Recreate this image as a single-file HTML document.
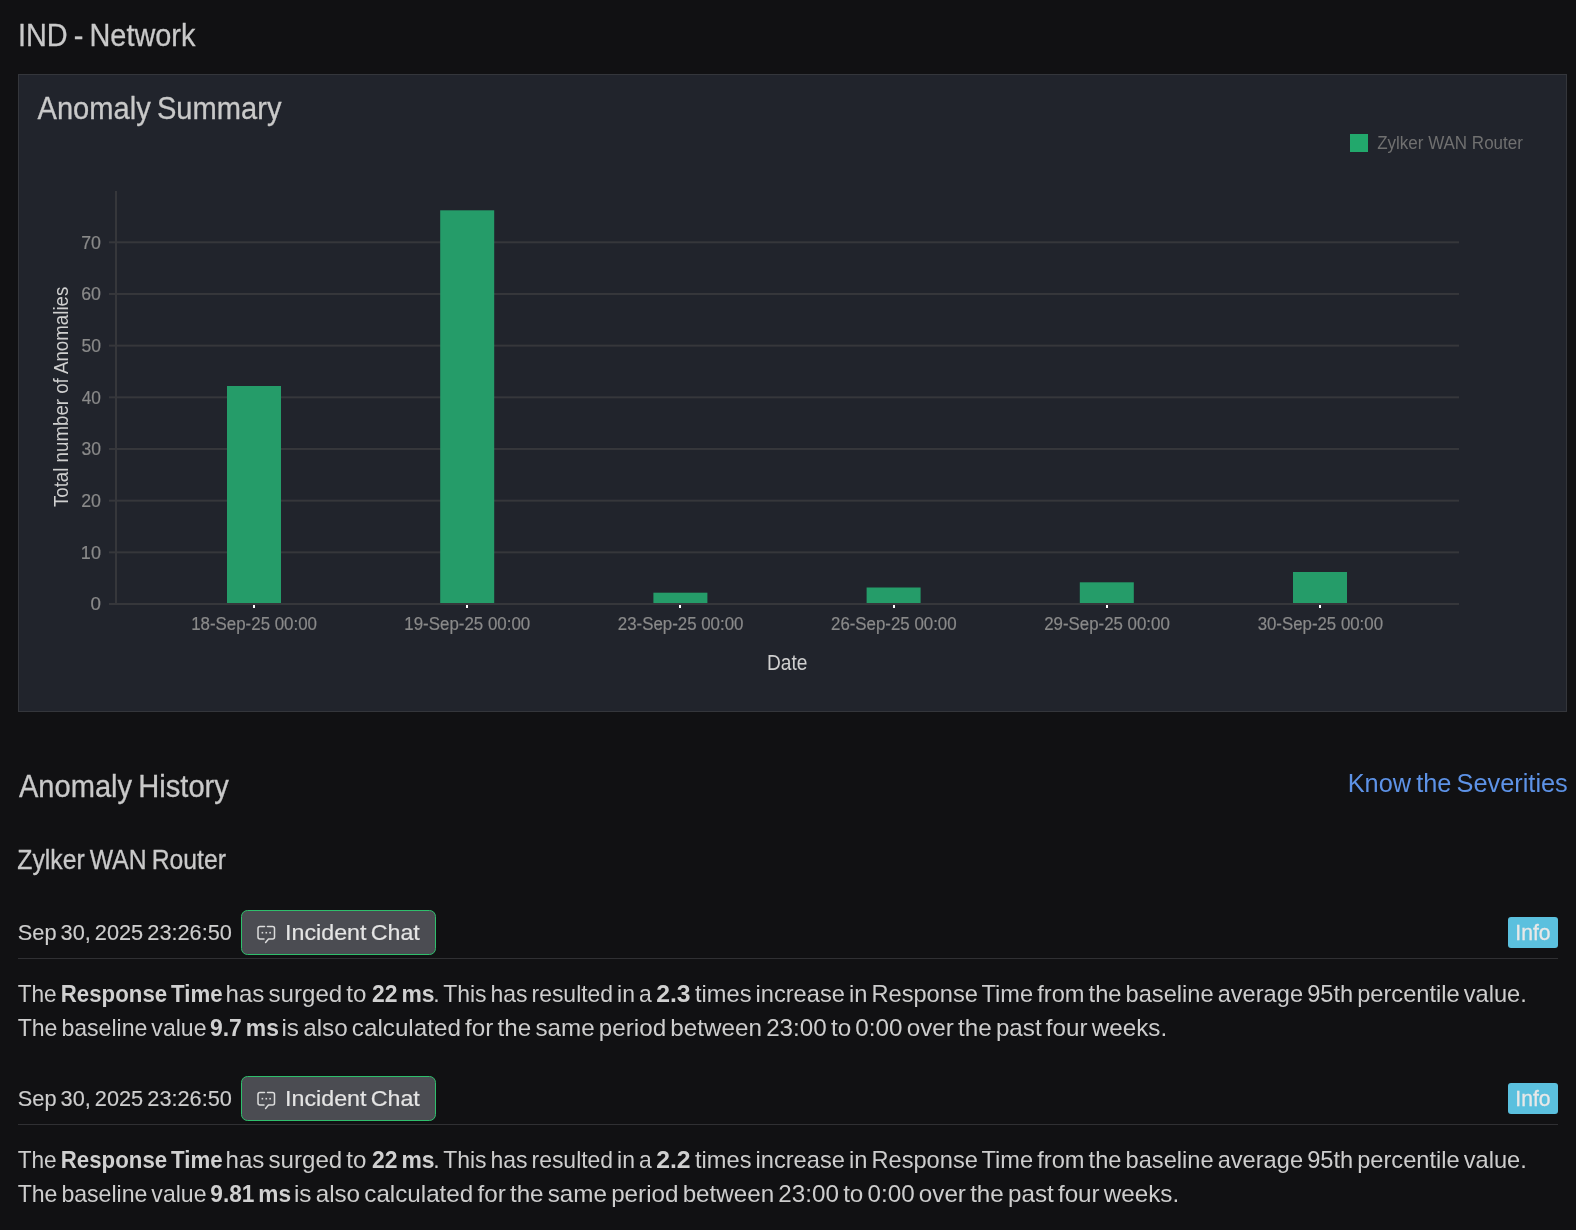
<!DOCTYPE html>
<html><head><meta charset="utf-8"><title>IND - Network</title>
<style>
html,body{margin:0;padding:0;background:#111113;}
body{width:1576px;height:1230px;overflow:hidden;font-family:"Liberation Sans",sans-serif;}
svg{display:block;will-change:transform;}
text{font-family:"Liberation Sans",sans-serif;}
</style></head>
<body>
<svg width="1576" height="1230" viewBox="0 0 1576 1230">
<rect x="18.5" y="74.5" width="1548" height="637" fill="#21242c" stroke="#34363b" stroke-width="1"/>
<rect x="109" y="603.00" width="1350" height="2" fill="#36373b"/>
<rect x="109" y="551.33" width="1350" height="2" fill="#36373b"/>
<rect x="109" y="499.66" width="1350" height="2" fill="#36373b"/>
<rect x="109" y="447.99" width="1350" height="2" fill="#36373b"/>
<rect x="109" y="396.32" width="1350" height="2" fill="#36373b"/>
<rect x="109" y="344.65" width="1350" height="2" fill="#36373b"/>
<rect x="109" y="292.98" width="1350" height="2" fill="#36373b"/>
<rect x="109" y="241.31" width="1350" height="2" fill="#36373b"/>
<rect x="115" y="191" width="2" height="413" fill="#36373b"/>
<rect x="227.0" y="386.0" width="54" height="217.0" fill="#259c69"/>
<rect x="253" y="605" width="2" height="3" fill="#ffffff"/>
<rect x="440.2" y="210.3" width="54" height="392.7" fill="#259c69"/>
<rect x="466" y="605" width="2" height="3" fill="#ffffff"/>
<rect x="653.4" y="592.7" width="54" height="10.3" fill="#259c69"/>
<rect x="679" y="605" width="2" height="3" fill="#ffffff"/>
<rect x="866.6" y="587.5" width="54" height="15.5" fill="#259c69"/>
<rect x="893" y="605" width="2" height="3" fill="#ffffff"/>
<rect x="1079.8" y="582.3" width="54" height="20.7" fill="#259c69"/>
<rect x="1106" y="605" width="2" height="3" fill="#ffffff"/>
<rect x="1293.0" y="572.0" width="54" height="31.0" fill="#259c69"/>
<rect x="1319" y="605" width="2" height="3" fill="#ffffff"/>
<rect x="1350" y="134" width="18" height="18" fill="#22a86c"/>
<rect x="241.5" y="910.5" width="194" height="44" rx="6" fill="#4b4c52" stroke="#2fbf6c" stroke-width="1"/>
<g transform="translate(0,0)" fill="none" stroke="#dcdcdc" stroke-width="1.5" stroke-linecap="round" stroke-linejoin="round">
<path d="M264.5 926.5 H260 a2 2 0 0 0 -2 2 V937 a2 2 0 0 0 2 2 H264"/>
<path d="M267.5 926.5 H272.5 a2 2 0 0 1 2 2 V937 a2 2 0 0 1 -2 2 H268.5 L265.6 942.5"/>
</g>
<g fill="#dcdcdc"><rect x="261.6" y="931.9" width="1.6" height="1.6"/><rect x="265.5" y="931.9" width="1.6" height="1.6"/><rect x="269.3" y="931.9" width="1.6" height="1.6"/></g>
<rect x="1508" y="917" width="50" height="31" rx="3" fill="#5bc0de"/>
<rect x="18" y="958" width="1540" height="1" fill="#303033"/>
<rect x="241.5" y="1076.5" width="194" height="44" rx="6" fill="#4b4c52" stroke="#2fbf6c" stroke-width="1"/>
<g transform="translate(0,166)" fill="none" stroke="#dcdcdc" stroke-width="1.5" stroke-linecap="round" stroke-linejoin="round">
<path d="M264.5 926.5 H260 a2 2 0 0 0 -2 2 V937 a2 2 0 0 0 2 2 H264"/>
<path d="M267.5 926.5 H272.5 a2 2 0 0 1 2 2 V937 a2 2 0 0 1 -2 2 H268.5 L265.6 942.5"/>
</g>
<g fill="#dcdcdc"><rect x="261.6" y="1097.9" width="1.6" height="1.6"/><rect x="265.5" y="1097.9" width="1.6" height="1.6"/><rect x="269.3" y="1097.9" width="1.6" height="1.6"/></g>
<rect x="1508" y="1083" width="50" height="31" rx="3" fill="#5bc0de"/>
<rect x="18" y="1124" width="1540" height="1" fill="#303033"/>
<text x="17.88" y="46.2" textLength="177.52" lengthAdjust="spacingAndGlyphs" font-size="31" fill="#c9c9c9" word-spacing="-2" stroke="#c9c9c9" stroke-width="0.3">IND - Network</text>
<text x="37.54" y="119" textLength="243.92" lengthAdjust="spacingAndGlyphs" font-size="31" fill="#c9c9c9" word-spacing="-2" stroke="#c9c9c9" stroke-width="0.3">Anomaly Summary</text>
<text x="1377.17" y="149" textLength="145.71" lengthAdjust="spacingAndGlyphs" font-size="18" fill="#707070">Zylker WAN Router</text>
<text x="90.52" y="610.3" textLength="10.45" lengthAdjust="spacingAndGlyphs" font-size="18" fill="#8a8a8a" stroke="#8a8a8a" stroke-width="0.2">0</text>
<text x="80.87" y="558.63" textLength="20.08" lengthAdjust="spacingAndGlyphs" font-size="18" fill="#8a8a8a" stroke="#8a8a8a" stroke-width="0.2">10</text>
<text x="81.17" y="506.96" textLength="19.78" lengthAdjust="spacingAndGlyphs" font-size="18" fill="#8a8a8a" stroke="#8a8a8a" stroke-width="0.2">20</text>
<text x="81.45" y="455.29" textLength="19.49" lengthAdjust="spacingAndGlyphs" font-size="18" fill="#8a8a8a" stroke="#8a8a8a" stroke-width="0.2">30</text>
<text x="81.73" y="403.62" textLength="19.21" lengthAdjust="spacingAndGlyphs" font-size="18" fill="#8a8a8a" stroke="#8a8a8a" stroke-width="0.2">40</text>
<text x="81.45" y="351.95000000000005" textLength="19.49" lengthAdjust="spacingAndGlyphs" font-size="18" fill="#8a8a8a" stroke="#8a8a8a" stroke-width="0.2">50</text>
<text x="81.17" y="300.28000000000003" textLength="19.78" lengthAdjust="spacingAndGlyphs" font-size="18" fill="#8a8a8a" stroke="#8a8a8a" stroke-width="0.2">60</text>
<text x="81.17" y="248.61" textLength="19.78" lengthAdjust="spacingAndGlyphs" font-size="18" fill="#8a8a8a" stroke="#8a8a8a" stroke-width="0.2">70</text>
<text x="191.14" y="630" textLength="125.89" lengthAdjust="spacingAndGlyphs" font-size="18" fill="#8a8a8a" stroke="#8a8a8a" stroke-width="0.2">18-Sep-25 00:00</text>
<text x="404.34" y="630" textLength="125.89" lengthAdjust="spacingAndGlyphs" font-size="18" fill="#8a8a8a" stroke="#8a8a8a" stroke-width="0.2">19-Sep-25 00:00</text>
<text x="617.80" y="630" textLength="125.62" lengthAdjust="spacingAndGlyphs" font-size="18" fill="#8a8a8a" stroke="#8a8a8a" stroke-width="0.2">23-Sep-25 00:00</text>
<text x="831.00" y="630" textLength="125.62" lengthAdjust="spacingAndGlyphs" font-size="18" fill="#8a8a8a" stroke="#8a8a8a" stroke-width="0.2">26-Sep-25 00:00</text>
<text x="1044.20" y="630" textLength="125.62" lengthAdjust="spacingAndGlyphs" font-size="18" fill="#8a8a8a" stroke="#8a8a8a" stroke-width="0.2">29-Sep-25 00:00</text>
<text x="1257.67" y="630" textLength="125.36" lengthAdjust="spacingAndGlyphs" font-size="18" fill="#8a8a8a" stroke="#8a8a8a" stroke-width="0.2">30-Sep-25 00:00</text>
<text x="766.90" y="670.1" textLength="40.47" lengthAdjust="spacingAndGlyphs" font-size="21.5" fill="#cfcfcf">Date</text>
<text transform="rotate(-90)" x="-507.09" y="68" textLength="220.37" lengthAdjust="spacingAndGlyphs" font-size="20.5" fill="#cfcfcf">Total number of Anomalies</text>
<text x="18.94" y="796.8" textLength="209.91" lengthAdjust="spacingAndGlyphs" font-size="30.5" fill="#c9c9c9" word-spacing="-2" stroke="#c9c9c9" stroke-width="0.3">Anomaly History</text>
<text x="1347.72" y="792" textLength="220.07" lengthAdjust="spacingAndGlyphs" font-size="26" fill="#5d92e6" word-spacing="-2">Know the Severities</text>
<text x="17.36" y="869.2" textLength="208.62" lengthAdjust="spacingAndGlyphs" font-size="27" fill="#c9c9c9" word-spacing="-2" stroke="#c9c9c9" stroke-width="0.3">Zylker WAN Router</text>
<text x="17.79" y="940" textLength="214.17" lengthAdjust="spacingAndGlyphs" font-size="22" fill="#cdcdcd" word-spacing="-2" stroke="#cdcdcd" stroke-width="0.15">Sep 30, 2025 23:26:50</text>
<text x="285.09" y="940" textLength="134.72" lengthAdjust="spacingAndGlyphs" font-size="22" fill="#e4e4e4" word-spacing="-2" stroke="#e4e4e4" stroke-width="0.2">Incident Chat</text>
<text x="1515.30" y="940" textLength="35.21" lengthAdjust="spacingAndGlyphs" font-size="21.5" fill="#e8e8e8" stroke="#e8e8e8" stroke-width="0.3">Info</text>
<text x="17.65" y="1001.9" textLength="39.07" lengthAdjust="spacingAndGlyphs" font-size="24" fill="#cdcdcd">The</text>
<text x="60.81" y="1001.9" textLength="161.74" lengthAdjust="spacingAndGlyphs" font-size="24" fill="#d0d0d0" font-weight="bold" word-spacing="-2.5">Response Time</text>
<text x="225.49" y="1001.9" textLength="140.98" lengthAdjust="spacingAndGlyphs" font-size="24" fill="#cdcdcd" word-spacing="-2.5">has surged to</text>
<text x="371.98" y="1001.9" textLength="62.54" lengthAdjust="spacingAndGlyphs" font-size="24" fill="#d0d0d0" font-weight="bold" word-spacing="-2.5">22 ms</text>
<text x="433.21" y="1001.9" textLength="218.54" lengthAdjust="spacingAndGlyphs" font-size="24" fill="#cdcdcd" word-spacing="-2.5">. This has resulted in a</text>
<text x="656.23" y="1001.9" textLength="34.39" lengthAdjust="spacingAndGlyphs" font-size="24" fill="#d0d0d0" font-weight="bold">2.3</text>
<text x="695.00" y="1001.9" textLength="831.83" lengthAdjust="spacingAndGlyphs" font-size="24" fill="#cdcdcd" word-spacing="-2.5">times increase in Response Time from the baseline average 95th percentile value.</text>
<text x="17.64" y="1036.2" textLength="188.90" lengthAdjust="spacingAndGlyphs" font-size="24" fill="#cdcdcd" word-spacing="-2.5">The baseline value</text>
<text x="209.98" y="1036.2" textLength="68.94" lengthAdjust="spacingAndGlyphs" font-size="24" fill="#d0d0d0" font-weight="bold" word-spacing="-2.5">9.7 ms</text>
<text x="281.49" y="1036.2" textLength="885.70" lengthAdjust="spacingAndGlyphs" font-size="24" fill="#cdcdcd" word-spacing="-2.5">is also calculated for the same period between 23:00 to 0:00 over the past four weeks.</text>
<text x="17.79" y="1106" textLength="214.17" lengthAdjust="spacingAndGlyphs" font-size="22" fill="#cdcdcd" word-spacing="-2" stroke="#cdcdcd" stroke-width="0.15">Sep 30, 2025 23:26:50</text>
<text x="285.09" y="1106" textLength="134.72" lengthAdjust="spacingAndGlyphs" font-size="22" fill="#e4e4e4" word-spacing="-2" stroke="#e4e4e4" stroke-width="0.2">Incident Chat</text>
<text x="1515.30" y="1106" textLength="35.21" lengthAdjust="spacingAndGlyphs" font-size="21.5" fill="#e8e8e8" stroke="#e8e8e8" stroke-width="0.3">Info</text>
<text x="17.65" y="1167.9" textLength="39.07" lengthAdjust="spacingAndGlyphs" font-size="24" fill="#cdcdcd">The</text>
<text x="60.81" y="1167.9" textLength="161.74" lengthAdjust="spacingAndGlyphs" font-size="24" fill="#d0d0d0" font-weight="bold" word-spacing="-2.5">Response Time</text>
<text x="225.49" y="1167.9" textLength="140.98" lengthAdjust="spacingAndGlyphs" font-size="24" fill="#cdcdcd" word-spacing="-2.5">has surged to</text>
<text x="371.98" y="1167.9" textLength="62.54" lengthAdjust="spacingAndGlyphs" font-size="24" fill="#d0d0d0" font-weight="bold" word-spacing="-2.5">22 ms</text>
<text x="433.21" y="1167.9" textLength="218.54" lengthAdjust="spacingAndGlyphs" font-size="24" fill="#cdcdcd" word-spacing="-2.5">. This has resulted in a</text>
<text x="656.23" y="1167.9" textLength="34.39" lengthAdjust="spacingAndGlyphs" font-size="24" fill="#d0d0d0" font-weight="bold">2.2</text>
<text x="695.00" y="1167.9" textLength="831.83" lengthAdjust="spacingAndGlyphs" font-size="24" fill="#cdcdcd" word-spacing="-2.5">times increase in Response Time from the baseline average 95th percentile value.</text>
<text x="17.64" y="1202.2" textLength="188.90" lengthAdjust="spacingAndGlyphs" font-size="24" fill="#cdcdcd" word-spacing="-2.5">The baseline value</text>
<text x="210.29" y="1202.2" textLength="80.83" lengthAdjust="spacingAndGlyphs" font-size="24" fill="#d0d0d0" font-weight="bold" word-spacing="-2.5">9.81 ms</text>
<text x="293.99" y="1202.2" textLength="885.20" lengthAdjust="spacingAndGlyphs" font-size="24" fill="#cdcdcd" word-spacing="-2.5">is also calculated for the same period between 23:00 to 0:00 over the past four weeks.</text>
</svg>
</body></html>
